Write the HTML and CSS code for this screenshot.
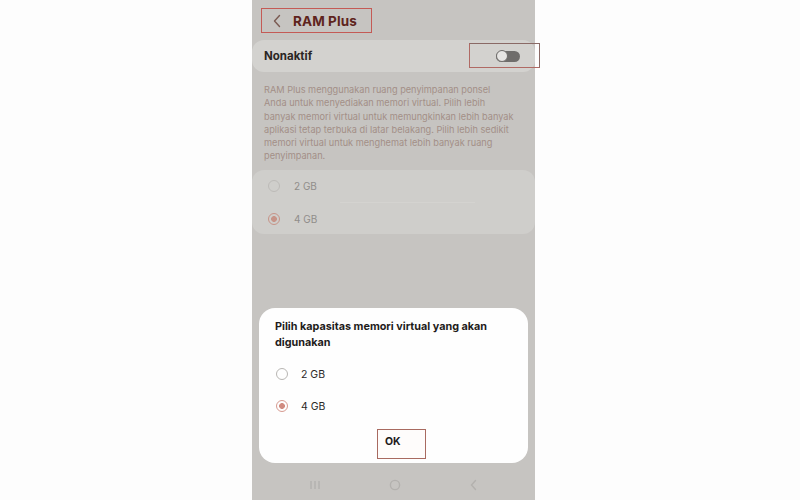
FILE: index.html
```html
<!DOCTYPE html>
<html lang="id">
<head>
<meta charset="utf-8">
<title>RAM Plus</title>
<link rel="stylesheet" href="styles.css">
</head>
<body>
<div class="phone">
  <header class="header">
    <div class="title-box">
      <svg class="chev" width="10" height="14" viewBox="0 0 10 14"><path d="M7.5 1.5 L2.5 7 L7.5 12.5" fill="none" stroke="#7a5a52" stroke-width="1.4" stroke-linecap="round" stroke-linejoin="round"/></svg>
      <span class="title">RAM Plus</span>
    </div>
  </header>

  <div class="toggle-row">
    <span class="toggle-label">Nonaktif</span>
    <div class="toggle-wrap">
      <span class="switch"><span class="knob"></span></span>
      <span class="mark-box"></span>
    </div>
  </div>

  <p class="desc">RAM Plus menggunakan ruang penyimpanan ponsel<br>Anda untuk menyediakan memori virtual. Pilih lebih<br>banyak memori virtual untuk memungkinkan lebih banyak<br>aplikasi tetap terbuka di latar belakang. Pilih lebih sedikit<br>memori virtual untuk menghemat lebih banyak ruang<br>penyimpanan.</p>

  <div class="bg-card">
    <div class="bg-row"><span class="bg-radio"></span><span class="bg-text">2 GB</span></div>
    <div class="bg-divider"></div>
    <div class="bg-row"><span class="bg-radio on"></span><span class="bg-text">4 GB</span></div>
  </div>

  <div class="spacer"></div>

  <div class="dialog">
    <div class="dlg-title">Pilih kapasitas memori virtual yang akan digunakan</div>
    <div class="dlg-row"><span class="radio"></span><span class="dlg-text">2 GB</span></div>
    <div class="dlg-row"><span class="radio on"></span><span class="dlg-text">4 GB</span></div>
    <div class="dlg-actions"><span class="ok">OK</span></div>
  </div>

  <nav class="navbar">
    <svg width="12" height="10" viewBox="0 0 12 10"><path d="M2 1v8M6 1v8M10 1v8" stroke="#b3b1ae" stroke-width="1.4"/></svg>
    <svg width="12" height="12" viewBox="0 0 12 12"><circle cx="6" cy="6" r="4.6" fill="none" stroke="#b3b1ae" stroke-width="1.4"/></svg>
    <svg width="10" height="12" viewBox="0 0 10 12"><path d="M6.5 1.5 L2.5 6 L6.5 10.5" fill="none" stroke="#b3b1ae" stroke-width="1.4" stroke-linecap="round"/></svg>
  </nav>
</div>
</body>
</html>
```

FILE: styles.css
```css
* { box-sizing: border-box; }
html, body { margin: 0; padding: 0; background: #fdfdfd; }
body {
  font-family: Inter, "Noto Sans", "Liberation Sans", sans-serif;
  width: 800px;
  height: 500px;
  overflow: hidden;
}
.phone {
  margin-left: 252px;
  width: 283px;
  height: 500px;
  background: #c6c4c1;
  display: flex;
  flex-direction: column;
}
.header { padding: 8px 0 0 9px; height: 40px; }
.title-box {
  width: 111px;
  height: 25px;
  border: 1.5px solid #c45a55;
  display: flex;
  align-items: center;
  padding-left: 10px;
  gap: 11px;
}
.chev { display: block; }
.title {
  font-size: 13.5px;
  font-weight: 700;
  color: #5e241d;
  letter-spacing: 0.1px;
}
.toggle-row {
  height: 32px;
  background: #d3d2cf;
  border-radius: 12px;
  display: flex;
  align-items: center;
  justify-content: space-between;
  padding: 0 15px 0 12px;
}
.toggle-label { font-size: 11.5px; font-weight: 700; color: #2a2624; }
.toggle-wrap { position: relative; display: flex; align-items: center; }
.switch {
  width: 24px;
  height: 11px;
  border-radius: 6px;
  background: #6f6d6b;
  position: relative;
  display: block;
}
.knob {
  position: absolute;
  left: 0;
  top: -0.5px;
  width: 12px;
  height: 12px;
  border-radius: 50%;
  background: #e6e5e3;
  border: 1.5px solid #6f6d6b;
}
.mark-box {
  position: absolute;
  left: -27px;
  top: -8px;
  width: 71px;
  height: 25px;
  border: 1.5px solid #b06a64;
  border-top-color: #8a6a66;
  border-right-color: #8a6a66;
}
.desc {
  margin: 0;
  padding: 11px 0 0 12px;
  font-size: 9.2px;
  line-height: 13.3px;
  color: #a38f87;
  white-space: nowrap;
  height: 98px;
}
.bg-card {
  background: #cfcecb;
  border-radius: 12px;
  height: 64px;
  display: flex;
  flex-direction: column;
}
.bg-row { height: 32px; display: flex; align-items: center; padding-left: 16px; gap: 14px; }
.bg-divider { height: 1px; margin: 0 60px 0 88px; background: #d4d3d0; }
.bg-row + .bg-divider + .bg-row { height: 31px; }
.bg-radio {
  width: 12px; height: 12px; border-radius: 50%;
  border: 1.3px solid #bdbbb8;
}
.bg-radio.on {
  border-color: #c79488;
  background: radial-gradient(circle, #c79488 0 2.6px, transparent 3.2px);
}
.bg-text { font-size: 10px; color: #908d8a; }
.spacer { flex: 1; }
.dialog {
  margin: 0 7px;
  height: 155px;
  background: #fefefe;
  border-radius: 16px;
  padding: 11px 16px 0 16px;
  display: flex;
  flex-direction: column;
}
.dlg-title {
  font-size: 10.8px;
  font-weight: 700;
  color: #1e1c1b;
  line-height: 16px;
  margin-bottom: 7px;
}
.dlg-row { height: 32px; display: flex; align-items: center; padding-left: 1px; gap: 13px; }
.radio {
  width: 12px; height: 12px; border-radius: 50%;
  border: 1.3px solid #b8b6b3;
}
.radio.on {
  border-color: #d79a90;
  background: radial-gradient(circle, #d08b80 0 2.6px, transparent 3.2px);
}
.dlg-text { font-size: 10.5px; color: #2a2826; }
.dlg-actions { display: flex; justify-content: flex-start; padding-left: 102px; margin-top: 7px; }
.ok {
  width: 49px;
  height: 30px;
  border: 1.5px solid #a86a60;
  font-size: 10.5px;
  font-weight: 700;
  color: #1e1c1b;
  padding: 5px 0 0 7px;
  background: #fefcfb;
}
.navbar {
  height: 37px;
  display: flex;
  align-items: center;
  justify-content: space-between;
  padding: 6px 56px 0 57px;
}
.navbar svg { display: block; }
```
